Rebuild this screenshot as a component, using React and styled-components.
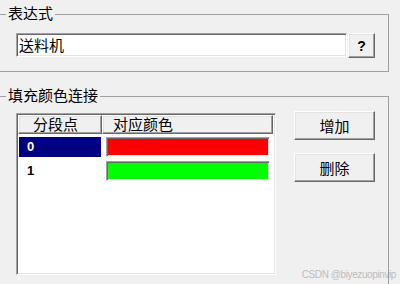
import React from "react";
import styled, { createGlobalStyle, css } from "styled-components";

const GlobalStyle = createGlobalStyle`
  html, body {
    margin: 0;
    padding: 0;
    background: #f0f0f0;
    overflow: hidden;
  }
  body {
    font-family: "Noto Sans CJK SC", "Liberation Sans", sans-serif;
    color: #000;
  }
`;

const sunken = css`
  border: 1px solid;
  border-color: #a0a0a0 #ffffff #ffffff #a0a0a0;
  box-shadow: inset 1px 1px 0 #696969, inset -1px -1px 0 #e3e3e3;
`;

const raised = css`
  border: 1px solid;
  border-color: #ffffff #696969 #696969 #ffffff;
  box-shadow: inset -1px -1px 0 #a0a0a0, inset 1px 1px 0 #e3e3e3;
`;

const Window = styled.div`
  position: relative;
  width: 400px;
  height: 284px;
  overflow: hidden;
  padding-top: 14px;
  box-sizing: border-box;
`;

const GroupBox = styled.div`
  position: relative;
  box-sizing: border-box;
  margin-left: -4px;
  margin-top: ${(p) => p.$top || 0}px;
  width: 393px;
  height: ${(p) => p.$height}px;
  border: 1px solid #a0a0a0;
  padding: ${(p) => p.$padTop}px 0 0 19px;
`;

const GroupTitle = styled.span`
  position: absolute;
  top: -10px;
  left: 9px;
  padding: 0 2px;
  background: #f0f0f0;
  font-size: 15px;
  line-height: 16px;
`;

const InputRow = styled.div`
  display: flex;
  align-items: flex-start;
  gap: 1px;
`;

const TextInput = styled.div`
  ${sunken};
  box-sizing: border-box;
  width: 331px;
  height: 24px;
  background: #fff;
  padding-left: 2px;
  font-size: 15px;
  line-height: 21px;
`;

const SmallButton = styled.div`
  ${raised};
  box-sizing: border-box;
  width: 27px;
  height: 25px;
  display: flex;
  align-items: center;
  justify-content: center;
  font-family: "Liberation Sans", sans-serif;
  font-weight: bold;
  font-size: 14px;
`;

const ContentRow = styled.div`
  display: flex;
  align-items: flex-start;
  gap: 18px;
`;

const ListView = styled.div`
  ${sunken};
  box-sizing: border-box;
  margin-top: 2px;
  width: 260px;
  height: 162px;
  background: #fff;
  padding: 1px;
`;

const Header = styled.div`
  display: flex;
`;

const HeaderCell = styled.div`
  ${raised};
  box-sizing: border-box;
  width: ${(p) => p.$w}px;
  height: 19px;
  padding-left: ${(p) => p.$pad}px;
  background: #f0f0f0;
  font-size: 15px;
  line-height: 16px;
`;

const Row = styled.div`
  display: flex;
  height: 24px;
  padding-top: 3px;
  box-sizing: border-box;
`;

const IndexCell = styled.div`
  margin-left: 1px;
  width: 82px;
  height: 20px;
  box-sizing: border-box;
  padding-left: 8px;
  background: ${(p) => (p.$selected ? "#000080" : "transparent")};
  color: ${(p) => (p.$selected ? "#fff" : "#000")};
  font-family: "Liberation Sans", sans-serif;
  font-weight: bold;
  font-size: 13px;
  line-height: 20px;
`;

const ColorCell = styled.div`
  ${sunken};
  box-sizing: border-box;
  margin-left: 5px;
  width: 164px;
  height: 20px;
  background: ${(p) => p.$color};
`;

const ButtonColumn = styled.div`
  display: flex;
  flex-direction: column;
  gap: 13px;
`;

const Button = styled.div`
  ${raised};
  box-sizing: border-box;
  width: 81px;
  height: 29px;
  background: #f0f0f0;
  display: flex;
  align-items: center;
  justify-content: center;
  font-size: 15px;
`;

const Watermark = styled.div`
  position: absolute;
  right: 4px;
  bottom: 4px;
  font-family: "Liberation Sans", sans-serif;
  font-size: 10px;
  letter-spacing: -0.4px;
  color: rgba(140, 140, 140, 0.55);
`;

const stops = [
  { id: "0", color: "#ff0000", selected: true },
  { id: "1", color: "#00ff00", selected: false },
];

const App = () => {
  return (
    <Window>
      <GlobalStyle />
      <GroupBox $height={58} $padTop={18}>
        <GroupTitle>表达式</GroupTitle>
        <InputRow>
          <TextInput>送料机</TextInput>
          <SmallButton>?</SmallButton>
        </InputRow>
      </GroupBox>
      <GroupBox $top={24} $height={240} $padTop={14}>
        <GroupTitle>填充颜色连接</GroupTitle>
        <ContentRow>
          <ListView>
            <Header>
              <HeaderCell $w={84} $pad={14}>分段点</HeaderCell>
              <HeaderCell $w={171} $pad={10}>对应颜色</HeaderCell>
            </Header>
            {stops.map((s) => (
              <Row key={s.id}>
                <IndexCell $selected={s.selected}>{s.id}</IndexCell>
                <ColorCell $color={s.color} />
              </Row>
            ))}
          </ListView>
          <ButtonColumn>
            <Button>增加</Button>
            <Button>删除</Button>
          </ButtonColumn>
        </ContentRow>
      </GroupBox>
      <Watermark>CSDN @biyezuopinvip</Watermark>
    </Window>
  );
};

export default App;
